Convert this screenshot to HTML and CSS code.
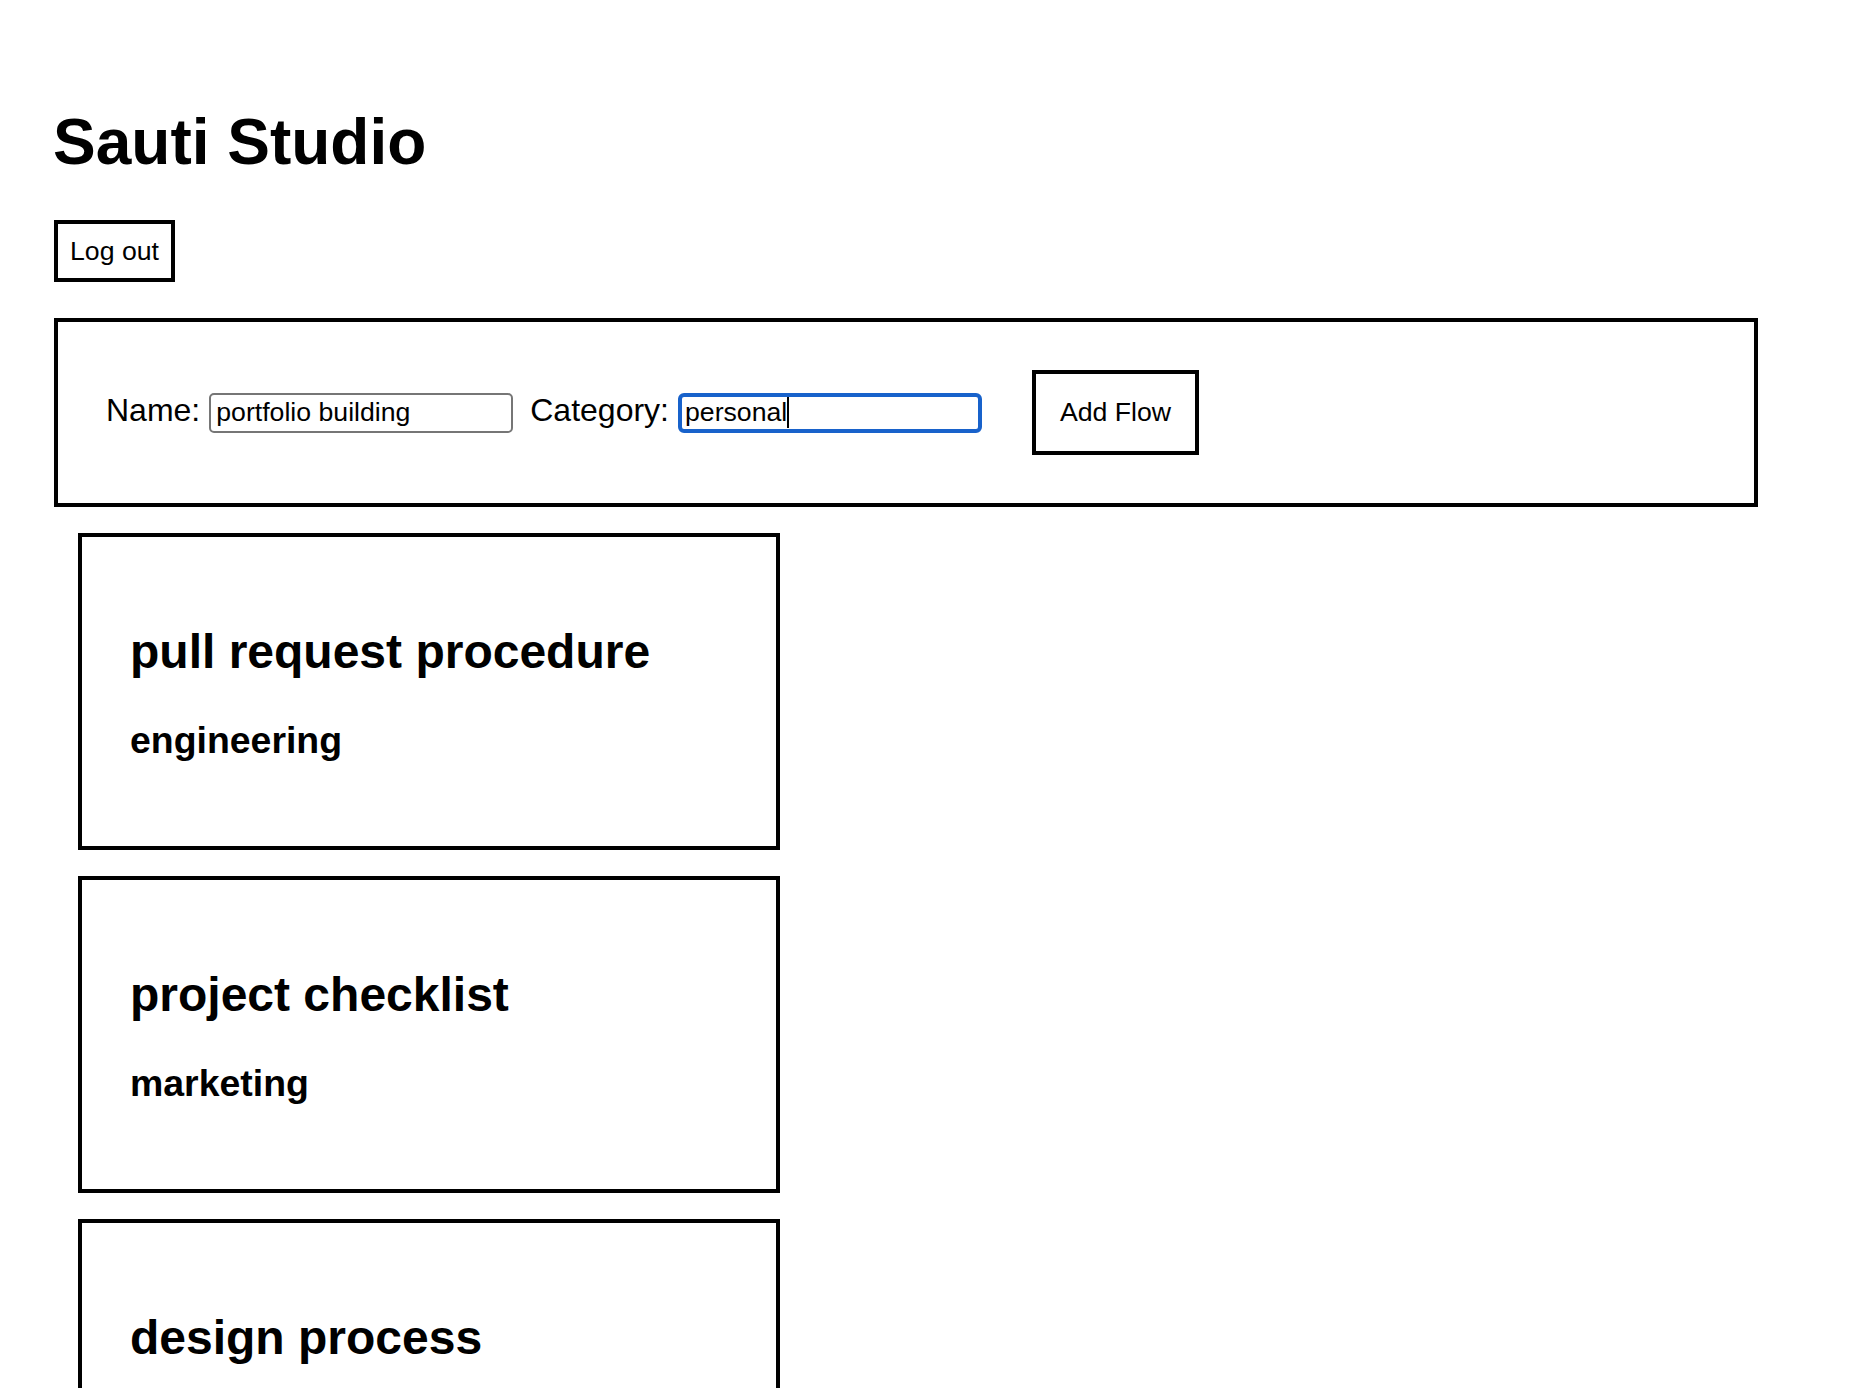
FILE: index.html
```html
<!DOCTYPE html>
<html lang="en">
<head>
<meta charset="utf-8">
<title>Sauti Studio</title>
<link rel="stylesheet" href="styles.css">
</head>
<body>
<div class="page">
  <h1 class="title">Sauti Studio</h1>
  <div class="nav">
    <button class="btn btn-logout" type="button">Log out</button>
  </div>
  <form class="flow-form">
    <label class="field-label" for="name">Name:</label>
    <input class="field-input field-input-name" id="name" type="text" value="portfolio building">
    <label class="field-label" for="category">Category:</label>
    <span class="input-wrap">
      <input class="field-input is-focused" id="category" type="text" value="personal">
      <span class="caret"></span>
    </span>
    <button class="btn btn-add" type="button">Add Flow</button>
  </form>
  <div class="flows">
    <div class="flow-card">
      <h2 class="flow-name">pull request procedure</h2>
      <h3 class="flow-category">engineering</h3>
    </div>
    <div class="flow-card">
      <h2 class="flow-name">project checklist</h2>
      <h3 class="flow-category">marketing</h3>
    </div>
    <div class="flow-card">
      <h2 class="flow-name">design process</h2>
      <h3 class="flow-category">design</h3>
    </div>
  </div>
</div>
</body>
</html>
```

FILE: styles.css
```css
html, body {
  margin: 0;
  padding: 0;
  background: #ffffff;
  color: #000000;
  font-family: "Liberation Sans", Arial, Helvetica, sans-serif;
}

.page {
  padding: 106px 116px 0 53px;
}

.title {
  font-size: 64px;
  font-weight: bold;
  line-height: 72px;
  margin: 0 0 42px 0;
}

.nav {
  display: flex;
}

.btn {
  font-family: "Liberation Sans", Arial, Helvetica, sans-serif;
  font-size: 26.67px;
  color: #000000;
  background: #ffffff;
  border: 4px solid #000000;
  border-radius: 0;
  margin: 0;
}

.btn-logout {
  line-height: 30px;
  padding: 12px 12px;
  margin-left: 1px;
}

.flow-form {
  display: flex;
  align-items: baseline;
  margin-top: 36px;
  border: 4px solid #000000;
  padding: 48px 48px;
  margin-left: 1px;
}

.field-label {
  font-size: 32px;
  margin-right: 9px;
}

.field-input {
  box-sizing: border-box;
  width: 304px;
  height: 40px;
  font-family: "Liberation Sans", Arial, Helvetica, sans-serif;
  font-size: 26.67px;
  line-height: 30px;
  color: #000000;
  padding: 3px 5px;
  border: 2px solid #767676;
  border-radius: 5px;
  background: #ffffff;
  margin: 0;
  outline: none;
}

.field-input-name {
  margin-right: 17px;
}

.field-input.is-focused {
  border: 4px solid #1862cb;
  border-radius: 6px;
  padding: 1px 3px;
}

.input-wrap {
  position: relative;
  display: inline-block;
}

.caret {
  position: absolute;
  left: 109px;
  top: 4px;
  width: 2px;
  height: 31px;
  background: #000000;
}

.btn-add {
  line-height: 29px;
  padding: 24px 24px;
  margin-left: 50px;
}

.flows {
  display: flex;
  flex-direction: column;
  align-items: flex-start;
  gap: 26px;
  margin-top: 26px;
  padding-left: 25px;
}

.flow-card {
  box-sizing: border-box;
  width: 702px;
  border: 4px solid #000000;
  padding: 0 48px;
}

.flow-name {
  font-size: 48px;
  font-weight: bold;
  line-height: 54px;
  margin: 88px 0 40px 0;
}

.flow-category {
  font-size: 37.44px;
  font-weight: bold;
  line-height: 42px;
  margin: 0 0 85px 0;
}
```
